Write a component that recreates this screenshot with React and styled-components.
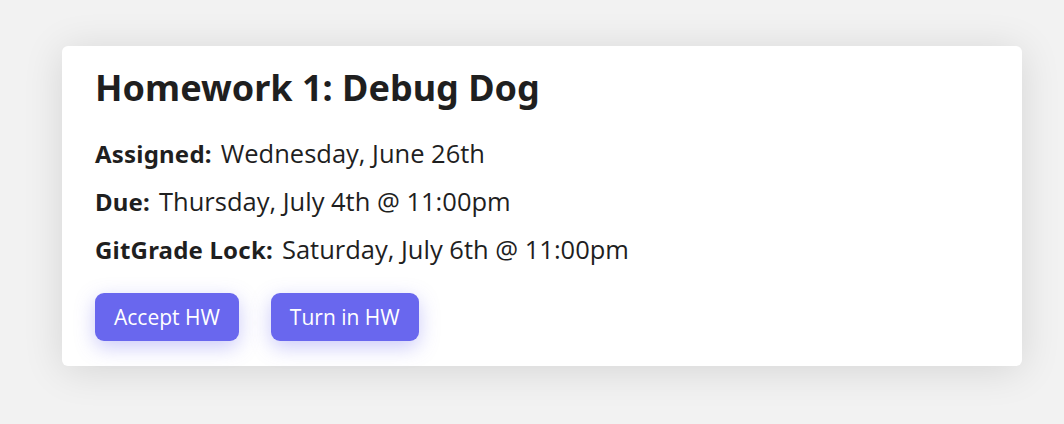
import React from 'react';
import styled, { createGlobalStyle } from 'styled-components';

const GlobalStyle = createGlobalStyle`
  body {
    margin: 0;
    background: #f2f2f2;
    font-family: "Open Sans", "Noto Sans", sans-serif;
    color: #1f1f1f;
  }
`;

const Page = styled.div`
  padding: 46px 42px 58px 62px;
`;

const Card = styled.div`
  background: #ffffff;
  border-radius: 6px;
  box-shadow: 0 4px 40px rgba(0, 0, 0, 0.12);
  padding: 20px 33px 24px;
  height: 320px;
  box-sizing: border-box;
`;

const Title = styled.h1`
  margin: 0 0 26px;
  font-family: "Noto Sans", "Open Sans", sans-serif;
  font-weight: 700;
  font-size: 36px;
  line-height: 44px;
  color: #1f1f1f;
`;

const Info = styled.div`
  display: flex;
  flex-direction: column;
  gap: 13px;
`;

const Row = styled.div`
  display: flex;
  align-items: baseline;
  gap: 9px;
  line-height: 34px;
`;

const Label = styled.span`
  font-family: "Noto Sans", sans-serif;
  font-weight: 700;
  font-size: 24px;
  letter-spacing: 0.2px;
`;

const Value = styled.span`
  font-size: 25.5px;
`;

const Actions = styled.div`
  display: flex;
  gap: 32px;
  margin-top: 26px;
`;

const Button = styled.button`
  height: 48px;
  padding: 0 19px;
  border: none;
  border-radius: 9px;
  background: #6967ee;
  color: #ffffff;
  font-family: "Open Sans", sans-serif;
  font-size: 21px;
  box-shadow: 0 6px 20px rgba(105, 103, 238, 0.35);
  cursor: pointer;
`;

const rows = [
  ['Assigned:', 'Wednesday, June 26th'],
  ['Due:', 'Thursday, July 4th @ 11:00pm'],
  ['GitGrade Lock:', 'Saturday, July 6th @ 11:00pm'],
];

const App = () => (
  <>
    <GlobalStyle />
    <Page>
      <Card>
        <Title>Homework 1: Debug Dog</Title>
        <Info>
          {rows.map(([label, value]) => (
            <Row key={label}>
              <Label>{label}</Label>
              <Value>{value}</Value>
            </Row>
          ))}
        </Info>
        <Actions>
          <Button>Accept HW</Button>
          <Button>Turn in HW</Button>
        </Actions>
      </Card>
    </Page>
  </>
);

export default App;
